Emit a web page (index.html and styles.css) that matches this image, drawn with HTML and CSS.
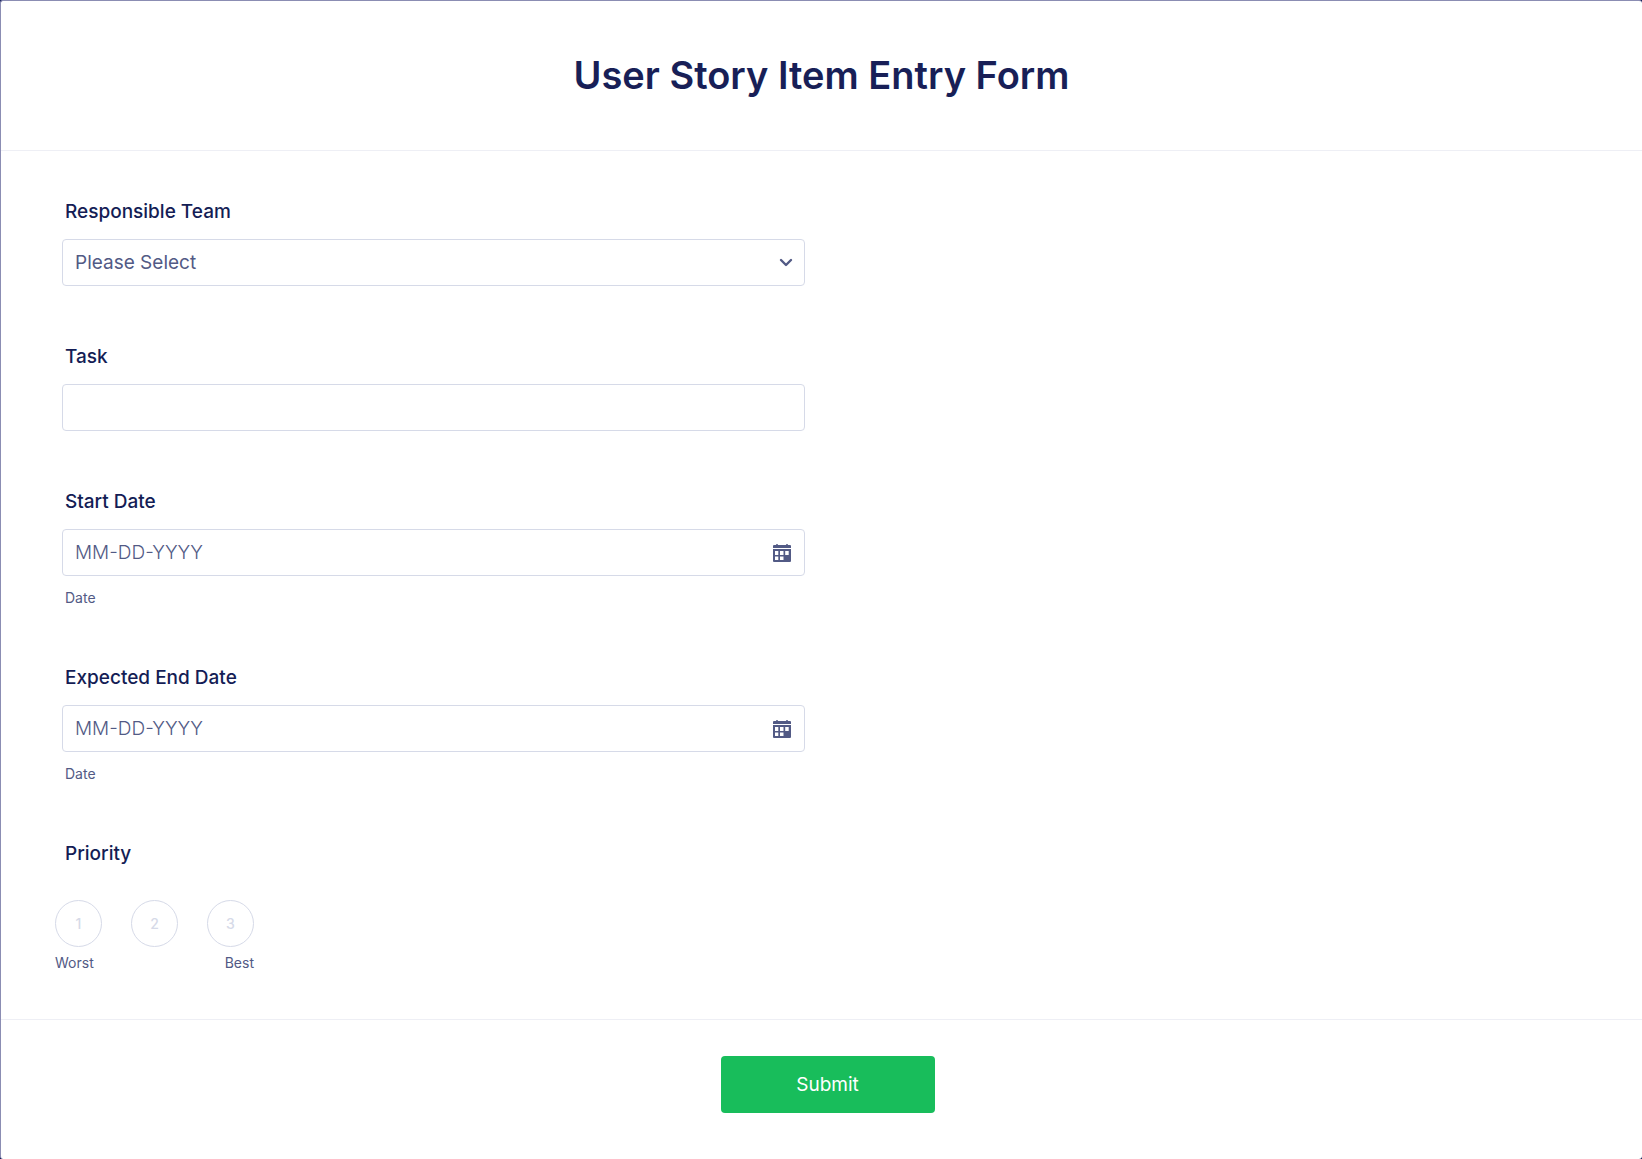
FILE: index.html
```html
<!DOCTYPE html>
<html lang="en">
<head>
    <meta charset="UTF-8">
    <meta name="viewport" content="width=device-width, initial-scale=1.0">
    <title>User Story Item Entry Form</title>
    <link rel="stylesheet" href="styles.css">
</head>
<body>

<form class="form-card" action="" method="post">
    <header class="form-header">
        <h1>User Story Item Entry Form</h1>
    </header>

    <div class="form-body">
        <div class="field">
            <label class="field-label" for="team">Responsible Team</label>
            <div class="control">
                <select id="team" name="team">
                    <option value="">Please Select</option>
                </select>
                <svg class="chevron" width="14" height="10" viewBox="0 0 14 10" aria-hidden="true">
                    <path d="M2 2l5 5 5-5" fill="none" stroke="#525a85" stroke-width="2.4" stroke-linecap="round" stroke-linejoin="round"/>
                </svg>
            </div>
        </div>

        <div class="field">
            <label class="field-label" for="task">Task</label>
            <div class="control">
                <input type="text" id="task" name="task">
            </div>
        </div>

        <div class="field">
            <label class="field-label" for="startDate">Start Date</label>
            <div class="control">
                <input type="text" id="startDate" name="startDate" placeholder="MM-DD-YYYY">
                <button type="button" class="calendar" aria-label="Pick start date">
                    <svg width="18" height="18" viewBox="0 0 18 18" aria-hidden="true">
                        <path fill="#525a85" fill-rule="evenodd" d="M3 1a1 1 0 0 1 2 0h8a1 1 0 0 1 2 0h2a1 1 0 0 1 1 1v2H0V2a1 1 0 0 1 1-1zM0 5h18V17a1 1 0 0 1-1 1H1a1 1 0 0 1-1-1zM2 7v4h3.300V7zM7 7v4h3.500V7zM12.200 7v4h3.500V7zM2 12.500v3.500h3.300v-3.500zM7 12.500v3.500h3.500v-3.500z"/>
                    </svg>
                </button>
            </div>
            <span class="sub-label">Date</span>
        </div>

        <div class="field">
            <label class="field-label" for="endDate">Expected End Date</label>
            <div class="control">
                <input type="text" id="endDate" name="endDate" placeholder="MM-DD-YYYY">
                <button type="button" class="calendar" aria-label="Pick expected end date">
                    <svg width="18" height="18" viewBox="0 0 18 18" aria-hidden="true">
                        <path fill="#525a85" fill-rule="evenodd" d="M3 1a1 1 0 0 1 2 0h8a1 1 0 0 1 2 0h2a1 1 0 0 1 1 1v2H0V2a1 1 0 0 1 1-1zM0 5h18V17a1 1 0 0 1-1 1H1a1 1 0 0 1-1-1zM2 7v4h3.300V7zM7 7v4h3.500V7zM12.200 7v4h3.500V7zM2 12.500v3.500h3.300v-3.500zM7 12.500v3.500h3.500v-3.500z"/>
                    </svg>
                </button>
            </div>
            <span class="sub-label">Date</span>
        </div>

        <div class="priority" role="radiogroup" aria-labelledby="priorityLabel">
            <div class="field-label" id="priorityLabel">Priority</div>
            <div class="scale">
                <div class="scale-items">
                    <div class="scale-item">
                        <input type="radio" id="priority1" name="priority" value="1">
                        <label for="priority1">1</label>
                    </div>
                    <div class="scale-item">
                        <input type="radio" id="priority2" name="priority" value="2">
                        <label for="priority2">2</label>
                    </div>
                    <div class="scale-item">
                        <input type="radio" id="priority3" name="priority" value="3">
                        <label for="priority3">3</label>
                    </div>
                </div>
                <div class="scale-text">
                    <span>Worst</span>
                    <span>Best</span>
                </div>
            </div>
        </div>
    </div>

    <footer class="form-footer">
        <button type="submit" class="submit">Submit</button>
    </footer>
</form>

</body>
</html>
```

FILE: styles.css
```css
* {
    box-sizing: border-box;
}

body {
    margin: 0;
    background-color: #0a1551;
    font-family: Inter, "Liberation Sans", sans-serif;
    color: #141d55;
}

.form-card {
    min-height: 100vh;
    background-color: #fff;
    border-top: 1px solid #8b8db3;
    border-left: 1px solid #8b8db3;
    border-radius: 3px;
}

.form-header {
    padding: 50px 20px 51px;
    border-bottom: 1px solid #eeeff5;
    text-align: center;
}

h1 {
    margin: 0;
    font-size: 38px;
    font-weight: 600;
    line-height: 48px;
    color: #181f57;
}

.form-body {
    padding: 49px 46px 47px 45px;
    border-bottom: 1px solid #eeeff5;
}

.field {
    width: 50%;
    padding: 0 16px;
    margin-bottom: 59px;
}

.field-label {
    display: block;
    padding-left: 3px;
    margin-bottom: 15px;
    font-size: 19px;
    font-weight: 500;
    line-height: 24px;
}

.control {
    position: relative;
}

select,
input[type="text"] {
    display: block;
    width: 100%;
    height: 47px;
    padding: 0 12px;
    border: 1px solid #d6dae8;
    border-radius: 4px;
    background-color: #fff;
    font-family: inherit;
    font-size: 19px;
    color: #525a85;
    appearance: none;
}

input::placeholder {
    color: #525a85;
    font-weight: 300;
    opacity: 1;
}

.chevron {
    position: absolute;
    top: 19px;
    right: 12px;
    pointer-events: none;
}

.calendar {
    position: absolute;
    top: 15px;
    right: 14px;
    display: flex;
    padding: 0;
    border: none;
    background: none;
    cursor: pointer;
}

.sub-label {
    display: block;
    padding-left: 3px;
    margin-top: 13px;
    font-size: 14px;
    line-height: 18px;
    color: #525a85;
}

.priority {
    padding: 0 9px;
}

.priority .field-label {
    padding-left: 10px;
    margin-bottom: 34px;
}

.scale {
    display: inline-block;
}

.scale-items {
    display: flex;
    gap: 29px;
}

.scale-item {
    display: grid;
    place-items: center;
}

.scale-item input,
.scale-item label {
    grid-area: 1 / 1;
}

.scale-item input {
    width: 47px;
    height: 47px;
    margin: 0;
    border: 1px solid #d6dae8;
    border-radius: 50%;
    appearance: none;
    cursor: pointer;
}

.scale-item label {
    font-size: 14px;
    font-weight: 500;
    color: #d6dae8;
    pointer-events: none;
}

.scale-item input:checked {
    border-color: #18bd5b;
}

.scale-text {
    display: flex;
    justify-content: space-between;
    margin-top: 7px;
    font-size: 14px;
    line-height: 18px;
    color: #525a85;
}

.form-footer {
    display: flex;
    justify-content: center;
    padding: 36px 0 46px 12px;
}

.submit {
    width: 214px;
    height: 57px;
    border: none;
    border-radius: 4px;
    background-color: #18bd5b;
    font-family: inherit;
    font-size: 19px;
    color: #fff;
    cursor: pointer;
}
```
